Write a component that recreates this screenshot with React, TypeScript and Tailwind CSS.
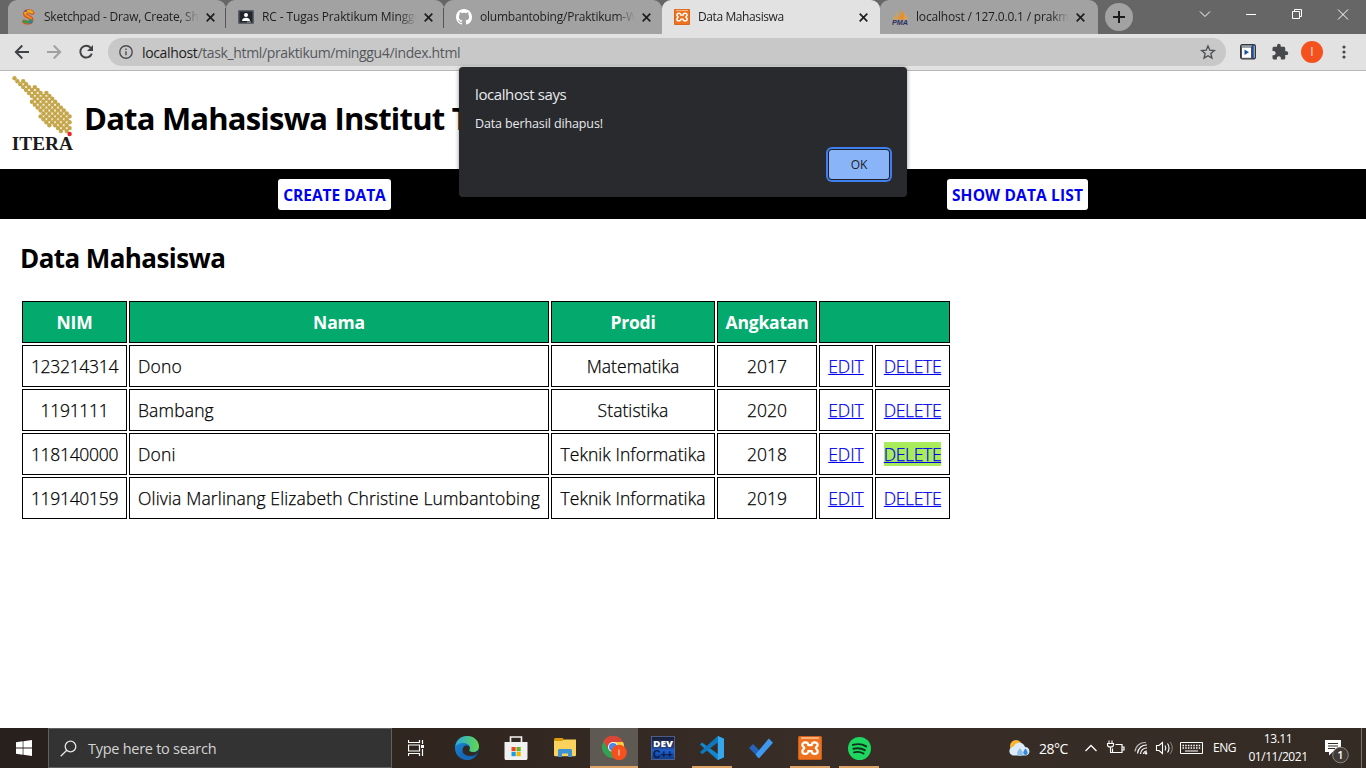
import React from "react";

type TabProps = {
  title: string;
  icon: React.ReactNode;
  active?: boolean;
  divider?: boolean;
  titleClass: string;
};

const SketchpadIcon = () => (
  <svg width="16" height="16" viewBox="0 0 16 16" fill="none">
    <path d="M12.300 3.800C11 1.800 5.400 1.600 5 4.600c-.3 3 6.600 3 6.400 6.200-.2 3.500-5.400 3.200-7.200 1.800" stroke="#d9541e" strokeWidth="4.200" strokeLinecap="round" />
    <path d="M12 3.400C10.500 2 6 1.600 5.200 4" stroke="#e3b21a" strokeWidth="2.400" strokeLinecap="round" />
    <path d="M5 5c.6 2.200 5.600 2.500 6.300 5" stroke="#f08a24" strokeWidth="1.800" />
    <path d="M11 11.500c-1.200 2-4.800 1.800-6.800.8" stroke="#3a9a4c" strokeWidth="2.800" strokeLinecap="round" />
    <path d="M9.500 14l3-1.800" stroke="#2b7ab8" strokeWidth="2.200" />
    <path d="M4.500 2.500l2.500-1" stroke="#7a3fa0" strokeWidth="1.600" />
  </svg>
);

const ClassroomIcon = () => (
  <svg width="16" height="14" viewBox="0 0 16 14">
    <rect width="16" height="14" rx="1" fill="#5a6068" />
    <rect x="1.500" y="1.500" width="13" height="11" fill="#20242b" />
    <circle cx="8" cy="5" r="2" fill="#fff" />
    <path d="M4 11c0-2.400 2-3.200 4-3.200s4 .8 4 3.200z" fill="#fff" />
    <rect x="9" y="11.500" width="4" height="1" fill="#aaa" />
  </svg>
);

const GithubIcon = () => (
  <svg width="16" height="16" viewBox="0 0 16 16" fill="#fff">
    <path d="M8 0C3.580 0 0 3.580 0 8c0 3.540 2.290 6.530 5.470 7.590.4.070.55-.17.55-.38 0-.19-.01-.82-.01-1.490-2.010.37-2.530-.49-2.690-.94-.09-.23-.48-.94-.82-1.130-.28-.15-.68-.52-.01-.53.63-.01 1.080.58 1.230.82.72 1.210 1.870.87 2.330.66.070-.52.28-.87.51-1.070-1.780-.2-3.640-.89-3.640-3.950 0-.87.31-1.590.82-2.150-.08-.2-.36-1.020.08-2.120 0 0 .67-.21 2.200.82.64-.18 1.320-.27 2-.27s1.360.09 2 .27c1.530-1.040 2.200-.82 2.200-.82.44 1.100.16 1.920.08 2.120.51.56.82 1.270.82 2.150 0 3.070-1.870 3.750-3.650 3.950.29.25.54.73.54 1.480 0 1.070-.01 1.930-.01 2.200 0 .21.15.46.55.38A8.010 8.010 0 0 0 16 8c0-4.420-3.580-8-8-8z" />
  </svg>
);

const XamppIcon = ({ size }: { size: number }) => (
  <svg width={size} height={size} viewBox="0 0 24 24" fill="none">
    <rect width="24" height="24" rx="2" fill="#ec7220" />
    <path d="M3 2h18" stroke="#fbc49a" strokeWidth="1.500" />
    <rect x=".5" y=".5" width="23" height="23" rx="1.500" stroke="#cf5f18" />
    <path d="M10.300 9.200C10.300 5.500 4.300 5.600 4.300 9c0 1.800 2 2 2 3s-2 1.200-2 3.200c0 3.500 6 3.500 6 0h3.400c0 3.500 6 3.500 6 0 0-2-2-2.200-2-3.200s2-1.200 2-3c0-3.400-6-3.500-6 .2z" stroke="#fff" strokeWidth="2.200" strokeLinejoin="round" />
  </svg>
);

const PmaIcon = () => (
  <svg width="16" height="16" viewBox="0 0 16 16">
    <path d="M.5 10.500C3 8 4.800 5 4.600 2c1.400 2.500 1.700 5.500.9 8.500z" fill="#d9a04a" />
    <path d="M5.500 10.500C8.500 7.500 9.700 3.500 9.200.5c2.500 3 3.300 6.500 2.500 10z" fill="#f08f1c" />
    <path d="M12 10.500c.8-2 .9-4.500.4-6.500 1.800 1.800 3.300 4 3.600 6.500z" fill="#e0a050" />
    <text x="0" y="15.800" textLength="16" lengthAdjust="spacingAndGlyphs" fontFamily="Liberation Sans" fontStyle="italic" fontWeight="bold" fontSize="6.500" fill="#2b3060">PMA</text>
  </svg>
);

function Tab({ title, icon, active, divider, titleClass }: TabProps) {
  return (
    <div className={"flex h-[34px] w-[218px] shrink-0 items-center rounded-t-[9px] pl-3 " + (active ? "bg-[#e2e2e2]" : "bg-[#a2a2a2]")}>
      <span className="flex w-4 justify-center">{icon}</span>
      <span className={"ml-2 overflow-hidden whitespace-nowrap text-[12px] text-[#1e1e1e] mask-r-from-88% " + titleClass}>{title}</span>
      <svg width="9" height="9" viewBox="0 0 9 9" className="ml-[7px]">
        <path d="M.7.7l7.600 7.600M8.300.7L.7 8.300" stroke="#1f1f1f" strokeWidth="1.700" />
      </svg>
      {divider && <span className="mt-px ml-auto h-5 w-px bg-[#555]" />}
    </div>
  );
}

function TabStrip() {
  return (
    <div className="flex h-[34px] items-center bg-[#666]">
      <div className="ml-2 flex items-end bg-[linear-gradient(#666_0_50%,#a2a2a2_50%)]">
        <Tab title="Sketchpad - Draw, Create, Share!" icon={<SketchpadIcon />} divider titleClass="w-[155px] tracking-[-0.24px]" />
        <Tab title="RC - Tugas Praktikum Minggu 4" icon={<ClassroomIcon />} divider titleClass="w-[155px] tracking-[-0.12px]" />
      </div>
      <div className="flex items-end bg-[linear-gradient(#666_0_50%,#e2e2e2_50%)]">
        <div className="flex rounded-br-[9px] bg-[linear-gradient(#666_0_50%,#a2a2a2_50%)]">
          <Tab title="olumbantobing/Praktikum-Web" icon={<GithubIcon />} titleClass="w-[155px] tracking-[-0.22px]" />
        </div>
      </div>
      <div className="flex bg-[linear-gradient(#666_0_50%,#e2e2e2_50%)]">
        <Tab title="Data Mahasiswa" icon={<XamppIcon size={16} />} active titleClass="w-[154px] tracking-[-0.4px]" />
      </div>
      <div className="flex bg-[linear-gradient(#666_0_50%,#e2e2e2_50%)]">
        <div className="flex rounded-b-[7px] bg-[linear-gradient(#666_0_50%,#a2a2a2_50%)]">
          <Tab title="localhost / 127.0.0.1 / prakmg" icon={<PmaIcon />} titleClass="w-[153px] tracking-[-0.18px]" />
        </div>
      </div>
      <span className="ml-[7px] flex size-7 items-center justify-center rounded-full bg-[#a2a2a2]">
        <svg width="12" height="12" viewBox="0 0 12 12"><path d="M6 0v12M0 6h12" stroke="#1b1b1b" strokeWidth="2" /></svg>
      </span>
      <svg width="180" height="34" viewBox="0 0 180 34" className="ml-auto" fill="none" stroke="#fff">
        <path d="M14 11.500l5 5 5-5M60 14.500h10M106.500 11.500h7v7h-7zM108.500 11.500v-2h7v7h-2M152 9.500l10 10M162 9.500l-10 10" />
      </svg>
    </div>
  );
}

function Toolbar() {
  return (
    <div className="flex h-[37px] items-center border-b border-[#b8b8b8] bg-[#e2e2e2] pl-[14px]">
      <svg width="82" height="16" viewBox="0 0 82 16" fill="none" strokeWidth="1.900" className="shrink-0">
        <path d="M15 8H2M8.300 1.500L1.800 8l6.500 6.500" stroke="#404246" />
        <path d="M33 8h13M39.700 1.500L46.200 8l-6.500 6.500" stroke="#a0a0a0" />
        <path d="M76.700 3.800A5.900 5.900 0 1 0 77.800 9.600" stroke="#404246" />
        <path d="M79 1v6h-6z" fill="#404246" />
      </svg>
      <div className="ml-3 flex h-7 w-[1118px] items-center rounded-full bg-[#c8c8c8] pl-[11px]">
        <svg width="14" height="14" viewBox="0 0 14 14" fill="none" stroke="#4b4d51" strokeWidth="1.400">
          <circle cx="7" cy="7" r="6.200" /><path d="M7 6.200v4M7 3.500v1.400" />
        </svg>
        <span className="ml-[9px] text-[14px] tracking-[-0.36px] text-[#55585c]"><span className="text-[#1d1e20]">localhost</span>/task_html/praktikum/minggu4/index.html</span>
        <svg width="16" height="16" viewBox="0 0 24 24" className="mr-[10px] ml-auto" fill="none" stroke="#4b4d51" strokeWidth="2">
          <path d="M12 3l2.700 6.300 6.800.6-5.200 4.500 1.600 6.700L12 17.500l-5.900 3.600 1.600-6.700-5.200-4.500 6.800-.6z" />
        </svg>
      </div>
      <svg width="16" height="16" viewBox="0 0 16 16" className="ml-[14px]">
        <rect x=".7" y=".7" width="14.600" height="14" rx="1.500" fill="#dfe7f2" stroke="#33373d" strokeWidth="1.400" />
        <path d="M12.700 1v13" stroke="#1f4f9c" strokeWidth="2.200" />
        <rect x="1.500" y="3" width="10" height="11.300" fill="#fff" stroke="#4b4f56" />
        <path d="M4.500 5.500v5.500l4.500-2.700z" fill="#16519f" />
      </svg>
      <svg width="18" height="18" viewBox="0 0 24 24" className="ml-[15px]" fill="#46484b">
        <path d="M20.500 11H19V7c0-1.100-.9-2-2-2h-4V3.500a2.500 2.500 0 0 0-5 0V5H4c-1.100 0-1.990.9-1.990 2v3.800H3.500c1.490 0 2.700 1.210 2.700 2.700s-1.210 2.700-2.700 2.700H2V20c0 1.100.9 2 2 2h3.800v-1.500c0-1.490 1.210-2.700 2.700-2.700 1.490 0 2.700 1.210 2.700 2.700V22H17c1.100 0 2-.9 2-2v-4h1.500a2.500 2.500 0 0 0 0-5z" />
      </svg>
      <span className="ml-3 flex size-[22px] items-center justify-center rounded-full bg-[#f4511e] text-[12px] text-white/80">I</span>
      <svg width="4" height="14" viewBox="0 0 4 14" className="ml-[19px]" fill="#46484b">
        <circle cx="2" cy="2" r="1.600" /><circle cx="2" cy="7" r="1.600" /><circle cx="2" cy="12" r="1.600" />
      </svg>
    </div>
  );
}

/* Each entry is one diagonal of the emblem: [first column, first row, number of dots]. */
const diagonals: [number, number, number][] = [
  [9, 13, 4],
  [6, 8, 11],
  [0, 0, 20],
  [3, 1, 17],
  [7, 3, 13],
  [11, 5, 9],
];

function IteraLogo() {
  return (
    <svg width="66" height="80" viewBox="0 0 66 80">
      {diagonals.flatMap(([col, row, count]) =>
        Array.from({ length: count }, (_, i) => (
          <circle
            key={`${col}-${i}`}
            cx={4.500 + (col + i) * 2.900}
            cy={4.300 + (row + i) * 2.930}
            r="2.200"
            fill={col === 0 && i === 19 ? "#e8222a" : "#c5a64b"}
          />
        ))
      )}
      <text x="1.800" y="75.800" textLength="61" lengthAdjust="spacingAndGlyphs" fontFamily="Liberation Serif" fontWeight="bold" fontSize="18" fill="#1c1a1a">ITERA</text>
    </svg>
  );
}

const rows = [
  { nim: "123214314", nama: "Dono", prodi: "Matematika", angkatan: "2017" },
  { nim: "1191111", nama: "Bambang", prodi: "Statistika", angkatan: "2020" },
  { nim: "118140000", nama: "Doni", prodi: "Teknik Informatika", angkatan: "2018", selected: true },
  { nim: "119140159", nama: "Olivia Marlinang Elizabeth Christine Lumbantobing", prodi: "Teknik Informatika", angkatan: "2019" },
];

function StudentTable() {
  const th = "border border-black bg-[#04aa6d] p-0 text-center font-bold text-white tracking-[-0.2px]";
  const td = "border border-black p-0 text-center";
  return (
    <table className="ml-5 w-[932px] table-fixed border-separate border-spacing-[2px] text-[17.500px] leading-6 text-black">
      <colgroup>
        <col className="w-[105px]" /><col className="w-[420px]" /><col className="w-[164px]" />
        <col className="w-[100px]" /><col className="w-[54px]" /><col className="w-[75px]" />
      </colgroup>
      <thead>
        <tr className="h-[42px]">
          <th className={th}>NIM</th><th className={th}>Nama</th><th className={th}>Prodi</th><th className={th}>Angkatan</th><th className={th} colSpan={2} />
        </tr>
      </thead>
      <tbody className="font-light [-webkit-text-stroke:0.25px]">
        {rows.map((r) => (
          <tr key={r.nim} className="h-[42px] whitespace-nowrap">
            <td className={td}><span className="tracking-[-0.3px]">{r.nim}</span></td>
            <td className="border border-black p-0 pl-2 text-left tracking-[0.15px]">{r.nama}</td>
            <td className={td}><span className="tracking-[0.06px]">{r.prodi}</span></td>
            <td className={td}>{r.angkatan}</td>
            <td className={td}><a className="text-[#0000ee] underline">EDIT</a></td>
            <td className={td}><a className={"text-[#0000ee] underline tracking-[-0.35px] " + (r.selected ? "bg-[#a8ec5b]" : "")}>DELETE</a></td>
          </tr>
        ))}
      </tbody>
    </table>
  );
}

function Page() {
  return (
    <main className="flex-1 bg-white text-black">
      <header className="flex h-[98px] pl-[10px]">
        <div className="mt-[3px]"><IteraLogo /></div>
        <h1 className="ml-2 pt-[25px] text-[31px] leading-[44px] font-bold whitespace-nowrap tracking-[-0.8px]">Data Mahasiswa Institut Teknologi Sumatera</h1>
      </header>
      <nav className="flex h-[50px] items-center justify-around bg-black text-[15.500px] font-bold text-[#0000ee]">
        <a className="flex h-[31px] w-[113px] items-center justify-center rounded-[3px] bg-white pt-[3px] tracking-[-0.05px]">CREATE DATA</a>
        <a className="flex h-[31px] w-[141px] items-center justify-center rounded-[3px] bg-white pt-[3px] tracking-[0.15px]">SHOW DATA LIST</a>
      </nav>
      <h2 className="mt-5 mb-[21px] ml-5 text-[26px] leading-[39px] font-bold tracking-[-0.58px]">Data Mahasiswa</h2>
      <StudentTable />
    </main>
  );
}

function AlertDialog() {
  return (
    <div className="absolute top-[67px] left-[459px] flex h-[130px] w-[448px] flex-col rounded-[4px] bg-[#292a2d] px-4 pt-4 text-[#e8eaed] shadow-[0_1px_4px_rgba(0,0,0,0.45)]">
      <p className="text-[15px] leading-[22px] tracking-[-0.4px]">localhost says</p>
      <p className="mt-[9px] text-[12.500px] leading-5 tracking-[-0.12px]">Data berhasil dihapus!</p>
      <button className="mt-4 mr-[2px] flex h-[29px] w-[60px] items-center justify-center self-end rounded-[3px] bg-[#8ab4f8] text-[12px] text-[#202124] shadow-[0_0_0_1px_#202124,0_0_0_3px_#3f7ff0]">OK</button>
    </div>
  );
}

const EdgeIcon = () => (
  <svg width="24" height="24" viewBox="0 0 24 24">
    <defs>
      <linearGradient id="edgeTop" x1="0" x2="1"><stop offset="0" stopColor="#2aa9e0" /><stop offset="1" stopColor="#62d84b" /></linearGradient>
      <linearGradient id="edgeLow" x1="0" x2="1" y2="1"><stop offset="0" stopColor="#1b8fdc" /><stop offset="1" stopColor="#0f4f9a" /></linearGradient>
    </defs>
    <circle cx="12" cy="12" r="12" fill="url(#edgeLow)" />
    <path d="M.3 10C1.500 4 6 0 12.200 0 19 0 24 5 24 10.500c0 3.500-2.800 5.500-6 5.500-3 0-4.300-1-3.500-2.200C16.500 11 13.500 7 8.500 7 4.500 7 1.500 9 .3 10z" fill="url(#edgeTop)" />
    <path d="M7.500 14.500c0-3.500 2.200-5.300 4.500-5 1.800.2 3.200 1.700 2.700 3.500-.9 1.200-1 2.800 3.300 3.300 2 .2 4-.6 6-2.300-.8 3.300-3.600 4.900-5.600 5.400-6 1.400-10.900-1-10.900-4.900z" fill="#312823" />
    <path d="M7.500 13.500c-.8 4.500 3.500 8 8 7.500 2.500-.3 4.500-1.300 6-2.500C19.500 22 16 24 12 24c-5.500-.5-8.500-6-4.500-10.500z" fill="#1769b8" />
  </svg>
);

const StoreIcon = () => (
  <svg width="24" height="24" viewBox="0 0 24 24">
    <path d="M6.500 7V1h11v6" fill="none" stroke="#f3f3f3" strokeWidth="1.600" />
    <path d="M.5 6h23v16.500c0 .8-.7 1.500-1.500 1.500H2c-.8 0-1.500-.7-1.500-1.500z" fill="#f1f1f1" />
    <path d="M7.500 11h4.200v4.200H7.500z" fill="#e84b22" /><path d="M12.500 11h4.200v4.200h-4.200z" fill="#69b41e" />
    <path d="M7.500 16h4.200v4.200H7.500z" fill="#169ee0" /><path d="M12.500 16h4.200v4.200h-4.200z" fill="#f4b400" />
  </svg>
);

const FolderIcon = () => (
  <svg width="22" height="20" viewBox="0 0 22 20">
    <path d="M0 1.500C0 .7.700 0 1.500 0H9l1 3v4H0z" fill="#d99a08" />
    <path d="M1 3h7l2-1.500h12V17a1.300 1.300 0 0 1-1.300 1.300H1.300A1.300 1.300 0 0 1 0 17V3z" fill="#fbd25b" />
    <path d="M4 19v-6.500c0-.8.700-1.500 1.500-1.500h11c.8 0 1.500.7 1.500 1.500V19h-4v-3.500H8V19z" fill="#3c93d6" />
  </svg>
);

const ChromeIcon = () => (
  <svg width="26" height="26" viewBox="0 0 26 26">
    <circle cx="12" cy="12" r="11" fill="#31a350" />
    <path d="M2.300 6.600A11 11 0 0 1 22 7.300H12L7.800 14.500z" fill="#dc4437" />
    <path d="M12 7h10a11 11 0 0 1-9.500 16L16.500 14z" fill="#fccf3f" />
    <circle cx="12" cy="12" r="5" fill="#fff" /><circle cx="12" cy="12" r="4" fill="#4688ee" />
    <circle cx="18" cy="17.500" r="7.800" fill="#f4511e" />
    <path d="M18 14.500v6" stroke="#f7c3b2" strokeWidth="1.300" />
  </svg>
);

const DevIcon = () => (
  <svg width="24" height="24" viewBox="0 0 24 24">
    <defs><linearGradient id="dev" x2="0" y2="1"><stop offset="0" stopColor="#171d36" /><stop offset=".45" stopColor="#263a72" /><stop offset=".6" stopColor="#1e61d0" /><stop offset="1" stopColor="#123b88" /></linearGradient></defs>
    <rect x=".5" y=".5" width="23" height="23" fill="url(#dev)" stroke="#596b9c" strokeWidth=".8" />
    <text x="2" y="10.500" textLength="20" lengthAdjust="spacingAndGlyphs" fontFamily="Open Sans" fontWeight="800" fontSize="9.500" fill="#fff">DEV</text>
    <text x="2" y="22" textLength="20" lengthAdjust="spacingAndGlyphs" fontFamily="Liberation Sans" fontWeight="800" fontSize="10.500" fill="#0c1c4b">C++</text>
  </svg>
);

const CodeIcon = () => (
  <svg width="24" height="24" viewBox="0 0 24 24">
    <path d="M17.800 0L24 2.700v18.600L17.800 24 0 8.500 2 6.500 18 18z" fill="#1585cd" />
    <path d="M17.800 0v6.400L2.200 18.200 0 16z" fill="#0f78bd" />
    <path d="M17.800 0L24 2.700v18.600L17.800 24z" fill="#36a6ee" />
  </svg>
);

const TodoIcon = () => (
  <svg width="26" height="22" viewBox="0 0 26 22">
    <path d="M1 11l4-4 7.500 7.500-4 4z" fill="#2564b8" />
    <path d="M7.500 17.500L20.800 1.500 25 5.700 11.800 20.500a1.400 1.400 0 0 1-2 0z" fill="#3d9af0" />
  </svg>
);

const SpotifyIcon = () => (
  <svg width="23" height="23" viewBox="0 0 24 24">
    <circle cx="12" cy="12" r="12" fill="#1ed760" />
    <path d="M5 8.300c4.500-1.300 10-.9 14 1.500M5.600 12.300c4-1.100 8.500-.6 12 1.400M6.200 16c3.500-.9 7-.5 10 1.200" fill="none" stroke="#13301d" strokeWidth="2" strokeLinecap="round" />
  </svg>
);

const apps: { icon: React.ReactNode; state?: "open" | "focused" }[] = [
  { icon: <EdgeIcon /> },
  { icon: <StoreIcon /> },
  { icon: <FolderIcon /> },
  { icon: <ChromeIcon />, state: "focused" },
  { icon: <DevIcon /> },
  { icon: <CodeIcon />, state: "open" },
  { icon: <TodoIcon /> },
  { icon: <XamppIcon size={24} />, state: "open" },
  { icon: <SpotifyIcon />, state: "open" },
];

function Tray() {
  return (
    <div className="ml-auto flex h-full items-center text-[12px] text-white">
      <svg width="22" height="18" viewBox="0 0 22 18">
        <circle cx="7" cy="7" r="6" fill="#f7b733" />
        <path d="M5 16.500a4.500 4.500 0 0 1-.3-9A6 6 0 0 1 16 8a4.300 4.300 0 0 1 1 8.500z" fill="#dcebf8" />
        <path d="M11 9c2 2.500 2.800 4 2.800 5.200a2.800 2.800 0 0 1-5.600 0C8.200 13 9 11.500 11 9z" fill="#8bbdeb" />
        <path d="M16.500 9.500c1.600 2 2.200 3.300 2.200 4.300a2.200 2.200 0 0 1-4.400 0c0-1 .6-2.300 2.200-4.300z" fill="#3887d4" />
      </svg>
      <span className="ml-2 w-[34px] text-[14px] tracking-[-0.5px]">28°C</span>
      <svg width="120" height="24" viewBox="0 0 120 24" className="ml-[10px]" fill="none" stroke="#fff">
        <path d="M2.500 15l5.500-5.500 5.500 5.500" strokeWidth="1.300" />
        <path d="M32.500 8.500h6.500v8h-9.500v-4M39.500 11h1.500v3h-1.500" strokeWidth="1.200" />
        <path d="M26 4.500v3M29 4.500v3M24.500 7.500h6v1.500c0 1.200-1 2-3 2s-3-.8-3-2zM27.500 11v5.500h3" strokeWidth="1.100" />
        <path d="M52 15.500a10 10 0 0 1 11-9" strokeWidth="1.100" stroke="#bbb" />
        <path d="M54.500 17.500A9 9 0 0 1 64 9M57.500 18a6 6 0 0 1 6.500-6M60.500 18a3.500 3.500 0 0 1 3.500-3" strokeWidth="1.200" />
        <circle cx="63" cy="17.300" r="1.200" fill="#fff" stroke="none" />
        <path d="M73.500 9.500h2.500l3.500-3v11l-3.500-3h-2.500zM82 9.500c1 1.500 1 3.500 0 5M84.500 7.500c2 2.500 2 6.500 0 9" strokeWidth="1.100" />
        <path d="M87 6c3 3.500 3 8.500 0 12" stroke="#888" />
        <path d="M97.500 6.500h22v11h-22z" />
        <path d="M99.500 9.500h18M99.500 12h18" strokeDasharray="1.500 1.200" strokeWidth="1.300" /><path d="M102 15h13" />
      </svg>
      <span className="ml-2.5 w-[24px] tracking-[-0.5px]">ENG</span>
      <div className="ml-[10px] w-[62px] text-center leading-[18px] whitespace-nowrap tracking-[-0.45px]">
        <div>13.11</div>
        <div>01/11/2021</div>
      </div>
      <svg width="26" height="26" viewBox="0 0 26 26" className="mt-[8px] ml-[15px]">
        <path d="M1 1h16v12H8.500L5 16.500V13H1z" fill="#fff" />
        <path d="M4 4.500h10M4 7h10M4 9.500h7" stroke="#352c26" />
        <circle cx="16.500" cy="16" r="7.800" fill="#413a35" stroke="#898480" />
        <text x="16.500" y="20" textAnchor="middle" fontFamily="Open Sans" fontWeight="600" fontSize="11" fill="#fff">1</text>
      </svg>
      <span className="mr-1 ml-[11px] h-full w-px bg-[#7b746f]" />
    </div>
  );
}

function Taskbar() {
  return (
    <footer className="flex h-10 items-center bg-[linear-gradient(90deg,#27201c_0%,#30261f_32%,#382e27_60%,#342b24_100%)]">
      <span className="flex w-12 justify-center">
        <svg width="16" height="16" viewBox="0 0 16 16" fill="#fff"><path d="M0 2.200l6.700-.9v6.300H0zM7.400 1.200L16 0v7.600H7.400zM0 8.400h6.700v6.300L0 13.800zM7.400 8.400H16V16l-8.600-1.200z" /></svg>
      </span>
      <div className="flex h-full w-[344px] items-center border border-[#606060] bg-[#333] pl-[11px]">
        <svg width="17" height="17" viewBox="0 0 17 17" fill="none" stroke="#e6e6e6" strokeWidth="1.300"><circle cx="10.500" cy="6.500" r="5.300" /><path d="M6.800 10.300L.7 16.200" /></svg>
        <span className="ml-[11px] pt-px text-[14.500px] tracking-[-0.27px] text-[#d4d4d4]">Type here to search</span>
      </div>
      <span className="flex w-12 justify-center">
        <svg width="16" height="16" viewBox="0 0 16 16" fill="none" stroke="#fff"><path d="M.5 0v2.500h11V0M.5 5h11v6H.5zM.5 16v-2.500h11V16M14.500 0v4M14.500 9v7" strokeWidth="1.200" /><path d="M13 5h3v3h-3z" fill="#fff" stroke="none" /></svg>
      </span>
      <div className="ml-[3px] flex h-full gap-px">
        {apps.map((app, i) => (
          <span key={i} className={"flex h-full w-12 flex-col items-center " + (app.state === "focused" ? "bg-[#5f5954]" : "")}>
            <span className="flex h-[38px] items-center pt-[2px]">{app.icon}</span>
            {app.state && <span className={"h-0.5 bg-[#dca265] " + (app.state === "focused" ? "w-12" : "w-10")} />}
          </span>
        ))}
      </div>
      <Tray />
    </footer>
  );
}

export default function App() {
  return (
    <div className="relative flex h-[768px] w-[1366px] flex-col overflow-hidden bg-white font-['Open_Sans','Noto_Sans',sans-serif]">
      <TabStrip />
      <Toolbar />
      <Page />
      <Taskbar />
      <AlertDialog />
    </div>
  );
}
